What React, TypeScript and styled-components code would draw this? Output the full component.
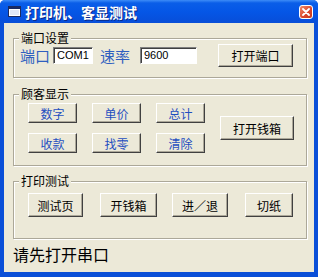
import React from "react";
import styled, { createGlobalStyle } from "styled-components";

const Global = createGlobalStyle`
  html, body { margin: 0; padding: 0; background: #fff; }
  body { font-family: "Noto Sans CJK SC", "Noto Sans", sans-serif; }
`;

const Window = styled.div`
  width: 318px;
  height: 277px;
  box-sizing: border-box;
  background: #0a4fd8;
  border-radius: 5px 5px 0 0;
  display: flex;
  flex-direction: column;
  padding: 0 4px 5px 4px;
`;

const TitleBar = styled.div`
  height: 23px;
  margin: 0 -4px;
  padding: 0 5px 0 8px;
  display: flex;
  align-items: center;
  border-radius: 5px 5px 0 0;
  background: linear-gradient(to bottom, #3d8cf7 0px, #0a5ee8 3px, #0556e6 12px, #0750dc 20px, #0a4fd8 23px);
`;

const TitleText = styled.span`
  flex: 1;
  margin-left: 4px;
  color: #fff;
  font-weight: bold;
  font-size: 14px;
  text-shadow: 1px 1px 0 #0a2a8a;
`;

const CloseBtn = styled.div`
  width: 14px;
  height: 14px;
  box-sizing: border-box;
  border: 1px solid #fff;
  border-radius: 3px;
  background: linear-gradient(135deg, #f08a6a, #d8452a 60%, #c53a20);
  display: flex;
  align-items: center;
  justify-content: center;
`;

const Client = styled.div`
  flex: 1;
  background: #ece9d8;
  padding: 7px 7px 0 9px;
  display: flex;
  flex-direction: column;
`;

const Group = styled.div<{ $h: number; $mt: number }>`
  height: ${(p) => p.$h}px;
  margin-top: ${(p) => p.$mt}px;
  box-sizing: border-box;
  border: 1px solid #aca899;
  box-shadow: inset 1px 1px 0 #fff, 1px 1px 0 #fff;
  display: flex;
  flex-direction: column;
`;

const Legend = styled.div`
  align-self: flex-start;
  margin: -8px 0 0 5px;
  padding: 0 2px;
  height: 14px;
  line-height: 14px;
  font-size: 12px;
  color: #000;
  background: #ece9d8;
`;

const PortRow = styled.div`
  display: flex;
  align-items: center;
  padding: 0 0 0 6px;
  margin-top: -1px;
`;

const BigLabel = styled.span<{ $w: number }>`
  width: ${(p) => p.$w}px;
  font-size: 15px;
  line-height: 18px;
  color: #2f5fc0;
`;

const TextBox = styled.div<{ $w: number }>`
  width: ${(p) => p.$w}px;
  height: 17px;
  box-sizing: border-box;
  background: #fff;
  border-top: 1px solid #808080;
  border-left: 1px solid #808080;
  border-right: 1px solid #fff;
  border-bottom: 1px solid #fff;
  box-shadow: inset 1px 1px 0 #404040;
  font-family: "Liberation Sans", Arial, sans-serif;
  font-size: 11px;
  line-height: 15px;
  padding-left: 3px;
  color: #000;
`;

const Button = styled.div<{ $w: number; $h: number; $blue?: boolean }>`
  width: ${(p) => p.$w}px;
  height: ${(p) => p.$h}px;
  box-sizing: border-box;
  background: #ece9d8;
  border-top: 1px solid #fff;
  border-left: 1px solid #fff;
  border-right: 1px solid #404040;
  border-bottom: 1px solid #404040;
  box-shadow: inset -1px -1px 0 #aca899;
  display: flex;
  align-items: center;
  justify-content: center;
  font-size: 12px;
  color: ${(p) => (p.$blue ? "#1f4fc0" : "#000")};
`;

const DisplayBody = styled.div`
  display: flex;
  align-items: center;
  padding: 2px 0 0 14px;
`;

const KeyGrid = styled.div`
  display: grid;
  grid-template-columns: repeat(3, 49px);
  column-gap: 15px;
  row-gap: 10px;
`;

const TestRow = styled.div`
  display: flex;
  padding: 5px 0 0 14px;
`;

const Status = styled.div`
  margin: 6px 0 0 0;
  font-size: 16px;
  line-height: 18px;
  color: #000;
`;

const Gap = styled.div<{ $w: number }>`
  width: ${(p) => p.$w}px;
  flex: none;
`;

const WinIcon = () => (
  <svg width="13" height="11" viewBox="0 0 13 11">
    <rect x="0.5" y="0.5" width="12" height="10" fill="#fff" stroke="#1a2a60" />
    <rect x="1" y="1" width="11" height="2" fill="#1a2a60" />
    <rect x="2" y="4" width="9" height="5" fill="#dfe8f8" />
  </svg>
);

const CloseX = () => (
  <svg width="8" height="8" viewBox="0 0 8 8">
    <path d="M1 1 L7 7 M7 1 L1 7" stroke="#fff" strokeWidth="1.8" strokeLinecap="round" />
  </svg>
);

export default function App() {
  return (
    <>
      <Global />
      <Window>
        <TitleBar>
          <WinIcon />
          <TitleText>打印机、客显测试</TitleText>
          <CloseBtn>
            <CloseX />
          </CloseBtn>
        </TitleBar>
        <Client>
          <Group $h={40} $mt={8}>
            <Legend>端口设置</Legend>
            <PortRow>
              <BigLabel $w={33}>端口</BigLabel>
              <TextBox $w={40}>COM1</TextBox>
              <Gap $w={7} />
              <BigLabel $w={40}>速率</BigLabel>
              <TextBox $w={57}>9600</TextBox>
              <Gap $w={21} />
              <Button $w={75} $h={23}>打开端口</Button>
            </PortRow>
          </Group>
          <Group $h={72} $mt={16}>
            <Legend>顾客显示</Legend>
            <DisplayBody>
              <KeyGrid>
                <Button $w={49} $h={20} $blue>数字</Button>
                <Button $w={49} $h={20} $blue>单价</Button>
                <Button $w={49} $h={20} $blue>总计</Button>
                <Button $w={49} $h={20} $blue>收款</Button>
                <Button $w={49} $h={20} $blue>找零</Button>
                <Button $w={49} $h={20} $blue>清除</Button>
              </KeyGrid>
              <Gap $w={15} />
              <Button $w={74} $h={24}>打开钱箱</Button>
            </DisplayBody>
          </Group>
          <Group $h={58} $mt={15}>
            <Legend>打印测试</Legend>
            <TestRow>
              <Button $w={55} $h={24}>测试页</Button>
              <Gap $w={17} />
              <Button $w={57} $h={24}>开钱箱</Button>
              <Gap $w={15} />
              <Button $w={56} $h={24}>进∕退</Button>
              <Gap $w={17} />
              <Button $w={48} $h={24}>切纸</Button>
            </TestRow>
          </Group>
          <Status>请先打开串口</Status>
        </Client>
      </Window>
    </>
  );
}
